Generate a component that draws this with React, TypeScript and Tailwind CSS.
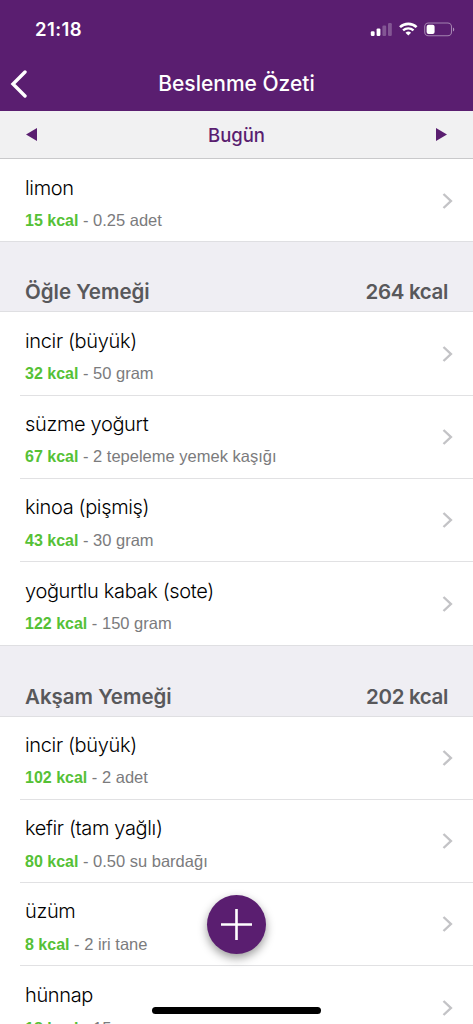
import React from "react";

type Food = { name: string; kcal: string; amount: string };
type Meal = { title: string; total: string; foods: Food[] };

const leftovers: Food[] = [{ name: "limon", kcal: "15 kcal", amount: "0.25 adet" }];

const meals: Meal[] = [
  {
    title: "Öğle Yemeği",
    total: "264 kcal",
    foods: [
      { name: "incir (büyük)", kcal: "32 kcal", amount: "50 gram" },
      { name: "süzme yoğurt", kcal: "67 kcal", amount: "2 tepeleme yemek kaşığı" },
      { name: "kinoa (pişmiş)", kcal: "43 kcal", amount: "30 gram" },
      { name: "yoğurtlu kabak (sote)", kcal: "122 kcal", amount: "150 gram" },
    ],
  },
  {
    title: "Akşam Yemeği",
    total: "202 kcal",
    foods: [
      { name: "incir (büyük)", kcal: "102 kcal", amount: "2 adet" },
      { name: "kefir (tam yağlı)", kcal: "80 kcal", amount: "0.50 su bardağı" },
      { name: "üzüm", kcal: "8 kcal", amount: "2 iri tane" },
      { name: "hünnap", kcal: "18 kcal", amount: "15 gram" },
    ],
  },
];

const StatusIcons: React.FC = () => (
  <svg width="86" height="16" viewBox="0 0 86 16" fill="none">
    <rect x="0.8" y="9.2" width="3.8" height="4.8" rx="1.2" fill="#fff" />
    <rect x="6.6" y="6.4" width="3.8" height="7.6" rx="1.2" fill="#fff" />
    <rect x="12.4" y="3.6" width="3.8" height="10.4" rx="1.2" fill="#fff" opacity="0.25" />
    <rect x="18" y="1" width="3.8" height="13" rx="1.2" fill="#fff" opacity="0.25" />
    <path d="M30 5.1a12.2 12.2 0 0 1 16.6 0" stroke="#fff" strokeWidth="2.6" />
    <path d="M33.1 8.4a7.6 7.6 0 0 1 10.4 0" stroke="#fff" strokeWidth="2.4" />
    <path d="M38.3 13.6l-2.8-2.8a4 4 0 0 1 5.6 0z" fill="#fff" />
    <rect x="54.7" y="1" width="26.8" height="12.8" rx="3.8" stroke="#fff" strokeOpacity="0.45" strokeWidth="1.1" />
    <rect x="56.6" y="2.8" width="8" height="9.2" rx="2" fill="#fff" />
    <path d="M83 5.4v4.2c1.7-.7 1.7-3.5 0-4.2z" fill="#fff" opacity="0.5" />
  </svg>
);

const FoodRow: React.FC<{ food: Food; last: boolean }> = ({ food, last }) => (
  <li className="h-[83.25px] shrink-0 pl-5">
    <div className={`h-full flex items-center justify-between pl-[5px] pr-[20.5px] ${last ? "" : "border-b border-[#e1e1e3]"}`}>
      <div className="pt-[5.5px]">
        <h3 className="text-[20px] leading-6 font-light tracking-[-0.35px] text-black whitespace-nowrap">{food.name}</h3>
        <p className="mt-[10.5px] text-[16.5px] leading-5 text-[#7b7b7d] whitespace-nowrap font-['Liberation_Sans',sans-serif]">
          <span className="text-[16px] font-bold text-[#55c136]">{food.kcal}</span> - {food.amount}
        </p>
      </div>
      <svg width="12" height="18" viewBox="0 0 12 18" fill="none">
        <path d="M2.5 2l7.4 7-7.4 7" stroke="#c3c3c6" strokeWidth="2.4" />
      </svg>
    </div>
  </li>
);

const FoodList: React.FC<{ foods: Food[] }> = ({ foods }) => (
  <ul className="bg-white">
    {foods.map((food, i) => (
      <FoodRow key={food.name} food={food} last={i === foods.length - 1} />
    ))}
  </ul>
);

const App: React.FC = () => {
  return (
    <div className="flex flex-col relative w-[473px] h-[1024px] overflow-hidden bg-white font-['Inter',sans-serif]">
      <header className="h-[111px] shrink-0 bg-[#5a1e70] text-white">
        <div className="h-[56px] flex items-center justify-between pl-[35px] pr-[17px] pt-[3px]">
          <span className="text-[18.5px] font-semibold tracking-[0.4px]">21:18</span>
          <StatusIcons />
        </div>
        <div className="h-[55px] grid grid-cols-[60px_1fr_60px] items-center">
          <svg className="ml-[10px]" width="18" height="28" viewBox="0 0 18 28" fill="none">
            <path d="M15 2L3 14l12 12" stroke="#fff" strokeWidth="3.4" strokeLinecap="round" />
          </svg>
          <h1 className="text-center text-[21px] font-medium whitespace-nowrap">Beslenme Özeti</h1>
        </div>
      </header>

      <nav className="h-[48px] shrink-0 flex items-center justify-between px-[26px] bg-[#f1f1f2] border-b border-[#c9c9cb]">
        <svg width="11" height="13" viewBox="0 0 11 13">
          <path d="M11 0v13L0 6.5z" fill="#5a1e70" />
        </svg>
        <span className="pt-[2px] text-[18.5px] font-medium text-[#5a1e70]">Bugün</span>
        <svg width="11" height="13" viewBox="0 0 11 13">
          <path d="M0 0v13l11-6.5z" fill="#5a1e70" />
        </svg>
      </nav>

      <main>
        <FoodList foods={leftovers} />
        {meals.map((meal) => (
          <section key={meal.title} className="first-of-type:-mt-px">
            <div className="h-[71.2px] flex items-end justify-between px-[25px] pb-[5px] bg-[#efeef3] border-y border-[#dfdfe2] text-[#58585b] text-[20.5px] leading-7 font-semibold">
              <h2>{meal.title}</h2>
              <span className="tracking-[-0.35px]">{meal.total}</span>
            </div>
            <FoodList foods={meal.foods} />
          </section>
        ))}
      </main>

      <button
        type="button"
        className="absolute left-[207px] top-[895px] size-[59px] rounded-full bg-[#5a1e70] flex items-center justify-center shadow-[0_4px_10px_rgba(0,0,0,0.4)]"
      >
        <svg width="31" height="31" viewBox="0 0 31 31">
          <path d="M15.5 0v31M0 15.5h31" stroke="#fff" strokeWidth="2.6" />
        </svg>
      </button>
      <div className="absolute left-[152px] top-[1007px] w-[169px] h-[7px] rounded-full bg-black" />
    </div>
  );
};

export default App;
